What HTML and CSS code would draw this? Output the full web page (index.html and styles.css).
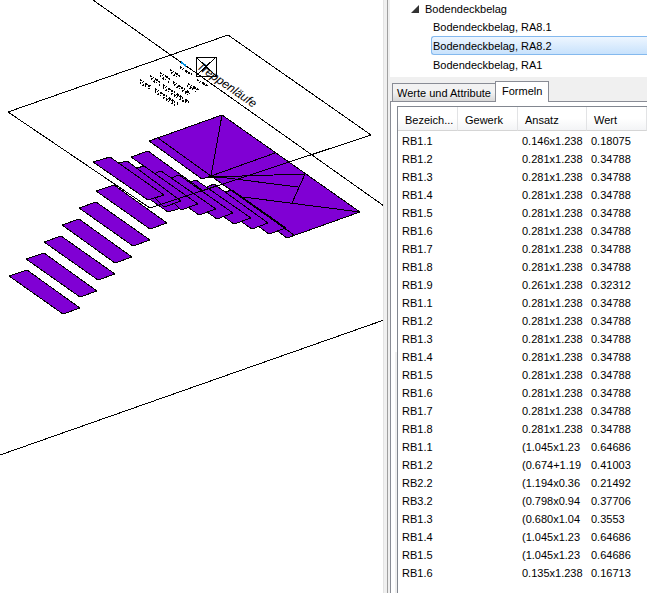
FILE: index.html
```
<!DOCTYPE html>
<html lang="de">
<head>
  <meta charset="UTF-8" />
  <meta name="viewport" content="width=device-width, initial-scale=1.0" />
  <title>Bodendeckbelag - Formeln</title>
  <link rel="stylesheet" href="styles.css">
</head>
<body>
  <main class="workspace">
    <section class="viewport">
      <svg class="drawing" viewBox="0 0 383 593" preserveAspectRatio="xMinYMin meet" role="img" aria-label="Treppe 3D">
        <!-- lower steps -->
        <g class="step">
          <polygon points="9,276 27,270 80,308 63,314" />
          <polygon points="26,259 44,253 97,291 80,297" />
          <polygon points="44,242 61,236 115,274 98,280" />
          <polygon points="62,225 79,219 132,257 115,263" />
          <polygon points="79,208 96,202 150,240 133,246" />
          <polygon points="96,191 114,185 167,223 150,229" />
        </g>
        <!-- landing -->
        <g class="step">
          <polygon points="149,141 222,115 360,212 287,238 269,225 276,222 211,176 202,179" />
        </g>
        <!-- upper steps, overlapping -->
        <g class="step">
          <polygon points="215,195 232,190 286,228 269,234" />
          <polygon points="197,191 214,184 268,223 252,229" />
          <polygon points="180,186 196,180 251,218 234,224" />
          <polygon points="131,157 148,151 202,190 185,195" />
          <polygon points="163,181 179,175 233,213 217,219" />
          <polygon points="145,177 161,171 216,209 199,215" />
          <polygon points="115,175 133,169 185,207 168,212" />
          <polygon points="137,168 144,166 198,204 181,210" />
          <polygon points="119,163 127,161 181,201 164,207" />
          <polygon points="93,162 110,157 164,195 148,200" />
        </g>
        <g class="edge">
          <path d="M158 138L211 176L294 235" />
          <path d="M222 115L211 176L275 153M211 177L305 174M211 176L298 187" />
          <path d="M305 174L292 203M243 197L360 212" />
          <path d="M206 177H220" />
          <path d="M8 112L228 35L371 135L150 208Z" />
          <path d="M93 0L384 206M0 455L384 320" />
        </g>
        <g class="marker">
          <rect x="196" y="57" width="20" height="19" />
          <path d="M196 57L216 76M216 57L196 76" />
        </g>
        <path class="axis" d="M181 62L186 66" />
        <!-- fine print of the plan, too small to read at this zoom -->
        <g class="fineprint">
          <path d="M140 80L151 87M155 89L178 104" />
          <path d="M150 76L160 82M163 85L189 102" />
          <path d="M160 73L170 79M173 82L190 93" />
          <path d="M170 70L180 76M188 84L199 90" />
          <path d="M180 67L192 75M197 80L208 86" />
        </g>
        <g class="fineprint lower">
          <path d="M140 83L150 89M155 92L175 105" />
          <path d="M151 79L160 85M163 88L186 103" />
          <path d="M160 76L169 82M174 85L188 94" />
          <path d="M171 73L179 78M187 86L196 91" />
        </g>
        <text class="plan-title" transform="translate(196 68) rotate(35)">Treppenläufe</text>
      </svg>
    </section>

    <aside class="panel">
      <nav class="tree">
        <button class="tree-item tree-parent" type="button">
          <svg class="arrow" viewBox="0 0 8 8"><path d="M8 0V8H0Z" /></svg>
          <span>Bodendeckbelag</span>
        </button>
        <button class="tree-item" type="button">Bodendeckbelag, RA8.1</button>
        <button class="tree-item selected" type="button">Bodendeckbelag, RA8.2</button>
        <button class="tree-item" type="button">Bodendeckbelag, RA1</button>
      </nav>

      <div class="tabs" role="tablist">
        <button class="tab" type="button" role="tab">Werte und Attribute</button>
        <button class="tab active" type="button" role="tab" aria-selected="true">Formeln</button>
      </div>

      <div class="tab-page">
        <div class="list">
          <table id="formulaTable">
            <thead>
              <tr>
                <th class="col-name">Bezeich...</th>
                <th class="col-trade">Gewerk</th>
                <th class="col-formula">Ansatz</th>
                <th>Wert</th>
              </tr>
            </thead>
            <tbody></tbody>
          </table>
        </div>
      </div>
    </aside>
  </main>

  <script>
    const formulas = [
      ['RB1.1', '0.146x1.238', '0.18075'],
      ['RB1.2', '0.281x1.238', '0.34788'],
      ['RB1.3', '0.281x1.238', '0.34788'],
      ['RB1.4', '0.281x1.238', '0.34788'],
      ['RB1.5', '0.281x1.238', '0.34788'],
      ['RB1.6', '0.281x1.238', '0.34788'],
      ['RB1.7', '0.281x1.238', '0.34788'],
      ['RB1.8', '0.281x1.238', '0.34788'],
      ['RB1.9', '0.261x1.238', '0.32312'],
      ['RB1.1', '0.281x1.238', '0.34788'],
      ['RB1.2', '0.281x1.238', '0.34788'],
      ['RB1.3', '0.281x1.238', '0.34788'],
      ['RB1.4', '0.281x1.238', '0.34788'],
      ['RB1.5', '0.281x1.238', '0.34788'],
      ['RB1.6', '0.281x1.238', '0.34788'],
      ['RB1.7', '0.281x1.238', '0.34788'],
      ['RB1.8', '0.281x1.238', '0.34788'],
      ['RB1.1', '(1.045x1.23', '0.64686'],
      ['RB1.2', '(0.674+1.19', '0.41003'],
      ['RB2.2', '(1.194x0.36', '0.21492'],
      ['RB3.2', '(0.798x0.94', '0.37706'],
      ['RB1.3', '(0.680x1.04', '0.3553'],
      ['RB1.4', '(1.045x1.23', '0.64686'],
      ['RB1.5', '(1.045x1.23', '0.64686'],
      ['RB1.6', '0.135x1.238', '0.16713'],
    ];

    const tbody = document.querySelector('#formulaTable tbody');
    formulas.forEach(([name, formula, value]) => {
      const row = document.createElement('tr');
      row.innerHTML = `<td>${name}</td><td></td><td>${formula}</td><td>${value}</td>`;
      tbody.appendChild(row);
    });
  </script>
</body>
</html>
```
FILE: styles.css
```
* {
  box-sizing: border-box;
}

body {
  margin: 0;
  background: #f0f0f0;
  color: #000;
  font-family: "Liberation Sans", Arial, sans-serif;
  font-size: 11px;
}

button {
  font: inherit;
  color: inherit;
  margin: 0;
  text-align: left;
  white-space: nowrap;
}

.workspace {
  display: grid;
  grid-template-columns: minmax(0, 1fr) 263px;
  height: 100vh;
  overflow: hidden;
}

/* 3D view */
.viewport {
  background: #fff;
  border-right: 1px solid #e3e3e3;
  overflow: hidden;
}

.drawing {
  display: block;
  width: 100%;
  shape-rendering: crispEdges;
}

.step {
  fill: #8000d4;
  stroke: #000;
}

.edge {
  fill: none;
  stroke: #000;
}

.marker {
  fill: none;
  stroke: #000;
}

.axis {
  stroke: #0090e0;
  stroke-width: 2;
}

.fineprint {
  fill: none;
  stroke: #000;
  stroke-width: 2;
  stroke-dasharray: 2 1 1 2 3 1;
}

.fineprint.lower {
  stroke-dasharray: 1 2 2 1 1 3;
}

.plan-title {
  font-size: 12px;
  font-style: italic;
}

/* right panel */
.panel {
  display: flex;
  flex-direction: column;
  min-width: 0;
  min-height: 0;
  margin-left: 3px;
  padding-left: 2px;
  border-left: 1px solid #a0a0a0;
  background: #f0f0f0;
}

.tree {
  display: flex;
  flex-direction: column;
  background: #fff;
  height: 77px;
  padding-left: 20px;
  flex: none;
}

.tree-item {
  height: 19px;
  flex: none;
  margin-left: 21px;
  padding: 0 1px;
  border: 1px solid transparent;
  border-radius: 3px;
  background: none;
}

.tree-parent {
  display: flex;
  align-items: center;
  gap: 6px;
  height: 17px;
  margin-left: 0;
  padding: 0;
}

.arrow {
  width: 8px;
  height: 8px;
  fill: #333;
}

.selected {
  border-color: #84b9ee;
  border-right: 0;
  border-radius: 3px 0 0 3px;
  background: linear-gradient(#eef6ff, #c8e2fc);
}

.tabs {
  display: flex;
  align-items: flex-end;
  flex: none;
  height: 24px;
  padding: 0 2px;
}

.tab {
  height: 18px;
  padding: 0 4px;
  border: 1px solid #898c95;
  border-right: 0;
  border-bottom: 0;
  background: linear-gradient(#f2f2f2 50%, #d8d8d8);
}

.tab.active {
  position: relative;
  z-index: 1;
  height: 21px;
  margin-bottom: -1px;
  padding: 0 6px 2px;
  border-right: 1px solid #898c95;
  background: #fff;
}

.tab-page {
  flex: 1;
  display: flex;
  min-height: 0;
  padding: 4px 0 0 6px;
  border: 1px solid #898c95;
  border-width: 1px 0 0 1px;
  background: linear-gradient(to right, #fff 4px, #f0f0f0 4px) 0 250px no-repeat #fff;
}

.list {
  flex: 1;
  min-width: 0;
  overflow: hidden;
  border: 1px solid #828790;
  border-width: 1px 0 0 1px;
  background: #fff;
}

table {
  width: 100%;
  table-layout: fixed;
  border-collapse: separate;
  border-spacing: 0;
}

th {
  height: 24px;
  padding: 2px 0 0 7px;
  border-right: 1px solid #e2e3e5;
  border-bottom: 1px solid #d5d5d5;
  background: linear-gradient(#fff 50%, #f3f4f6);
  font-weight: normal;
  text-align: left;
  white-space: nowrap;
}

.col-name,
.col-trade {
  width: 60px;
}

.col-formula {
  width: 69px;
}

td {
  height: 18px;
  padding: 2px 0 0 4px;
  white-space: nowrap;
}
```
